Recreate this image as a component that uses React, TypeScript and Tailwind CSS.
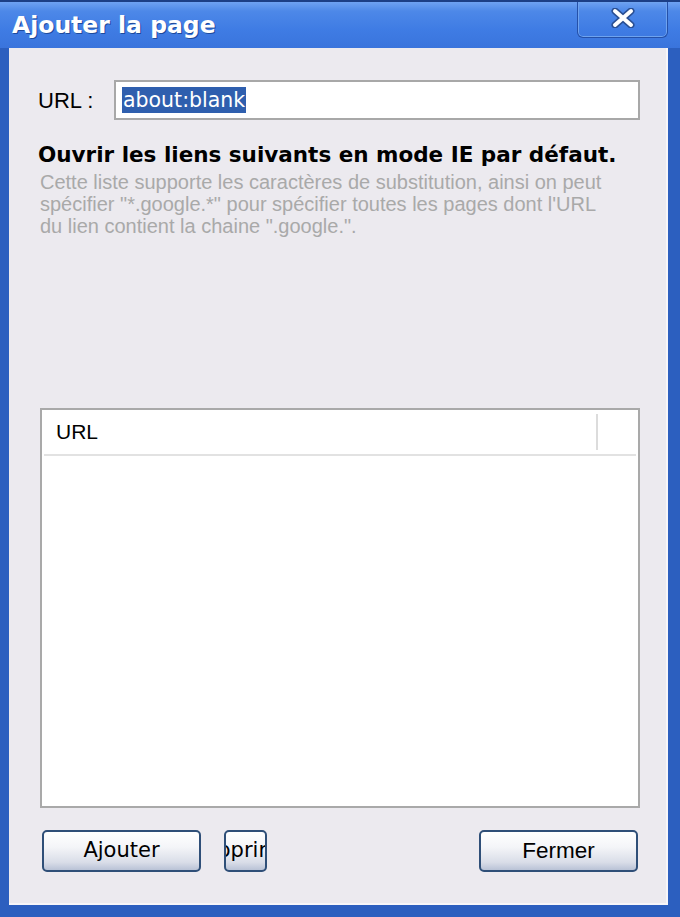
import React from "react";

export default function App() {
  return (
    <div className="w-[680px] h-[917px] flex flex-col bg-[#2c5fbf] overflow-hidden" style={{ fontFamily: '"DejaVu Sans", sans-serif' }}>
      {/* Title bar */}
      <div className="h-[48px] shrink-0 flex items-start border-t-[2px] border-[#1c3f86] bg-[linear-gradient(to_bottom,#6ea2f2_0%,#4d88e8_20%,#3f7ce4_60%,#3a74dc_100%)]">
        <div className="pl-[12px] pt-[9px] text-white font-bold text-[23.5px] leading-[28px] [text-shadow:1px_1px_0_#1d4a9c]">
          Ajouter la page
        </div>
        <div className="ml-auto mr-[12px] w-[91px] h-[36px] rounded-b-[6px] border border-t-0 border-[#2550a8] shadow-[inset_0_0_0_1px_#6fa3ee] flex items-start justify-center pt-[6px]">
          <svg width="28" height="20" viewBox="0 0 28 20">
            <path d="M6 3 L22 17 M22 3 L6 17" stroke="#2a4f93" strokeWidth="7" strokeLinecap="round" />
            <path d="M6 3 L22 17 M22 3 L6 17" stroke="#ffffff" strokeWidth="4" strokeLinecap="round" />
          </svg>
        </div>
      </div>

      {/* Body */}
      <div className="flex-1 flex flex-col bg-[#eceaef] border-l-[9px] border-r-[12px] border-b-[12px] border-[#2c5fbf] shadow-[inset_-2px_-2px_0_#f7f6f9]">
        <div className="h-[360px] shrink-0 flex flex-col">
          {/* URL row */}
          <div className="mt-[32px] pl-[29px] pr-[28px] flex items-center">
            <div className="w-[76px] text-[22px] text-black" style={{ fontFamily: '"Liberation Sans", sans-serif' }}>URL :</div>
            <div className="flex-1 h-[40px] bg-white border-[2px] border-[#a8a8a8] flex items-center pl-[6px]">
              <span className="bg-[#2f5fae] text-white text-[20.5px] leading-[26px] px-[1px]" style={{ fontFamily: '"DejaVu Sans", sans-serif' }}>about:blank</span>
            </div>
          </div>

          {/* Heading */}
          <div className="mt-[22px] pl-[29px] text-[21.5px] leading-[26px] font-bold text-black whitespace-nowrap">
            Ouvrir les liens suivants en mode IE par défaut.
          </div>
          <div className="mt-[3px] pl-[31px] text-[20px] leading-[22px] text-[#a9a9a9] whitespace-nowrap" style={{ fontFamily: '"Liberation Sans", sans-serif' }}>
            <div>Cette liste supporte les caractères de substitution, ainsi on peut</div>
            <div>spécifier "*.google.*" pour spécifier toutes les pages dont l'URL</div>
            <div>du lien contient la chaine ".google.".</div>
          </div>
        </div>

        {/* List */}
        <div className="ml-[31px] mr-[28px] h-[400px] shrink-0 bg-white border-[2px] border-[#a9a9a9] flex flex-col">
          <div className="h-[46px] mx-[2px] flex items-stretch border-b-[2px] border-[#e2e2e2]">
            <div className="flex-1 flex items-center pl-[12px] text-[21px] text-black" style={{ fontFamily: '"Liberation Sans", sans-serif' }}>URL</div>
            <div className="w-[2px] my-[4px] bg-[#dcdcdc]" />
            <div className="w-[38px]" />
          </div>
        </div>

        {/* Buttons */}
        <div className="mt-[22px] ml-[33px] mr-[30px] flex items-center">
          <button className="w-[159px] h-[42px] rounded-[5px] border-[2px] border-[#2f4f78] bg-[linear-gradient(to_bottom,#ffffff_0%,#f4f5f8_40%,#d9dde8_80%,#b9c2d6_100%)] text-[21px] text-black" style={{ fontFamily: '"DejaVu Sans", sans-serif' }}>
            Ajouter
          </button>
          <button className="ml-[23px] w-[43px] h-[42px] rounded-[5px] border-[2px] border-[#2f4f78] bg-[linear-gradient(to_bottom,#ffffff_0%,#f4f5f8_40%,#d9dde8_80%,#b9c2d6_100%)] text-[21px] text-black overflow-hidden flex items-center justify-center" style={{ fontFamily: '"DejaVu Sans", sans-serif' }}>
            <span className="whitespace-nowrap">Supprimer</span>
          </button>
          <button className="ml-auto w-[159px] h-[42px] rounded-[5px] border-[2px] border-[#2f4f78] bg-[linear-gradient(to_bottom,#ffffff_0%,#f4f5f8_40%,#d9dde8_80%,#b9c2d6_100%)] text-[22.5px] text-black" style={{ fontFamily: '"Liberation Sans", sans-serif' }}>
            Fermer
          </button>
        </div>
      </div>
    </div>
  );
}
